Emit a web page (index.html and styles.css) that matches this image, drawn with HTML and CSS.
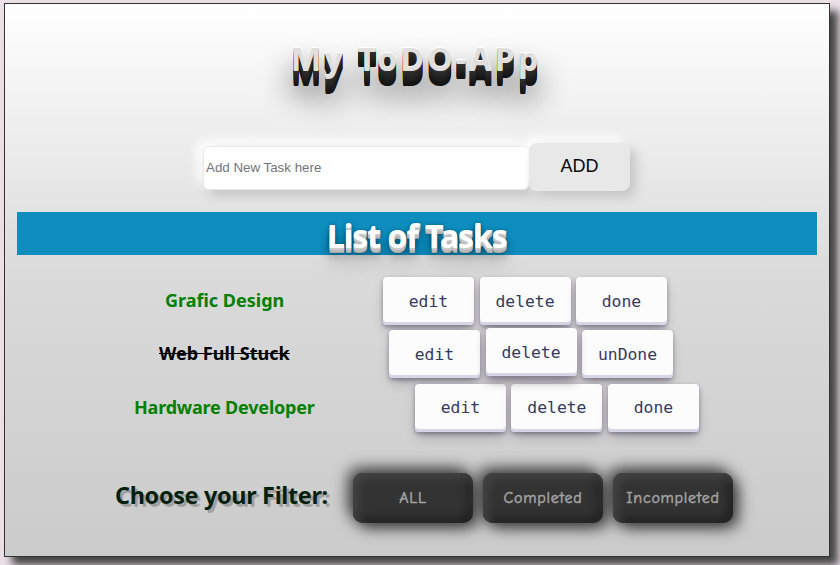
FILE: index.html
```html
<!DOCTYPE html>
<html lang="en">
<head>
<meta charset="utf-8">
<title>My ToDO-APp</title>
<link rel="stylesheet" href="styles.css">
</head>
<body>
<main class="app">
  <h1 class="title">My ToDO-APp</h1>
  <form class="add-form">
    <input class="task-input" type="text" placeholder="Add New Task here">
    <button class="add-button" type="button">ADD</button>
  </form>
  <h2 class="list-title">List of Tasks</h2>
  <ul class="tasks">
    <li class="task task-first">
      <span class="name">Grafic Design</span>
      <button class="key">edit</button><button class="key">delete</button><button class="key">done</button>
    </li>
    <li class="task task-second">
      <span class="name finished">Web Full Stuck</span>
      <button class="key">edit</button><button class="key raised">delete</button><button class="key">unDone</button>
    </li>
    <li class="task task-third">
      <span class="name">Hardware Developer</span>
      <button class="key">edit</button><button class="key">delete</button><button class="key">done</button>
    </li>
  </ul>
  <div class="filters">
    <h3 class="filter-title">Choose your Filter:</h3>
    <button class="filter">ALL</button><button class="filter">Completed</button><button class="filter">Incompleted</button>
  </div>
</main>
</body>
</html>
```
FILE: styles.css
```css
* { box-sizing: border-box; }
html, body { height: 100%; }
body {
  margin: 0;
  padding: 3px 0 0 4px;
  overflow: hidden;
  background: #ebe1e6;
  font-family: "Noto Sans", "Open Sans", sans-serif;
}
.app {
  width: 826px;
  height: 554px;
  padding: 0 12px;
  border: 1px solid #333;
  background: linear-gradient(#fff, #dadada 50%, #cbcbcb);
  box-shadow: 8px 8px 8px #444;
}
h1, h2, h3, ul { margin: 0; padding: 0; }
button { border: 0; padding: 0; font: inherit; }
.title {
  height: 139px;
  padding: 33px 0 0 274px;
  font-size: 32px;
  line-height: 44px;
  letter-spacing: 3.3px;
  white-space: nowrap;
  color: #e0dfdc;
  text-shadow: 0 -1px 0 #fff, 0 1px 0 #2e2e2e, 0 2px 0 #2c2c2c, 0 3px 0 #2a2a2a, 0 4px 0 #282828, 0 5px 0 #262626, 0 6px 0 #242424, 0 7px 0 #222, 0 8px 0 #202020, 0 9px 0 #1e1e1e, 0 10px 0 #1c1c1c, 0 11px 0 #1a1a1a, 0 12px 0 #181818, 0 13px 0 #161616, 0 14px 0 #141414, 0 15px 0 #121212, 0 22px 30px rgba(0, 0, 0, .9);
}
.add-form { display: flex; height: 69px; padding-left: 186px; }
.task-input {
  width: 326px;
  height: 44px;
  margin-top: 3px;
  padding: 0 2px 1px;
  border: 1px solid #e8e8e8;
  border-radius: 6px;
  background: #fff;
  font: 13.333px "Liberation Sans", sans-serif;
  box-shadow: 6px 6px 12px #c5c5c5, -6px -6px 12px #fff;
}
.add-button {
  width: 101px;
  height: 48px;
  padding-bottom: 2px;
  border-radius: 8px;
  background: #e8e8e8;
  color: #090909;
  font: 18px "Liberation Sans", sans-serif;
  box-shadow: 6px 6px 12px #c5c5c5, -6px -6px 12px #fff;
}
.list-title {
  height: 43px;
  padding-left: 310px;
  background: #0e8dbf;
  color: #fff;
  font-size: 32px;
  line-height: 48px;
  letter-spacing: -1.05px;
  text-shadow: 0 1px 0 #ccc, 0 2px 0 #c9c9c9, 0 3px 0 #bbb, 0 4px 0 #b9b9b9, 0 5px 0 #aaa, 0 6px 1px rgba(0, 0, 0, .1), 0 0 5px rgba(0, 0, 0, .1), 0 1px 3px rgba(0, 0, 0, .3), 0 3px 5px rgba(0, 0, 0, .2), 0 5px 10px rgba(0, 0, 0, .25), 0 10px 10px rgba(0, 0, 0, .2), 0 20px 20px rgba(0, 0, 0, .15);
}
.tasks { display: grid; gap: 5.4px; padding-top: 22px; list-style: none; }
.task { display: flex; height: 48px; gap: 5.5px; }
.task-first { padding-left: 148px; }
.task-second { padding-left: 142px; }
.task-third { padding-left: 117px; }
.name {
  width: 212.5px;
  color: green;
  font-size: 18px;
  font-weight: 700;
  line-height: 46px;
  white-space: nowrap;
}
.task-second .name { width: 224.5px; }
.task-third .name { width: 275.4px; letter-spacing: -.2px; }
.finished { color: #000; text-decoration: line-through; }
.key {
  width: 91px;
  height: 48px;
  border-radius: 4px;
  background: #fcfcfd;
  color: #36395a;
  font: 16.4px "DejaVu Sans Mono", monospace;
  box-shadow: rgba(45, 35, 66, .4) 0 2px 4px, rgba(45, 35, 66, .3) 0 7px 13px -3px, #d6d6e7 0 -3px 0 inset;
}
.raised { transform: translateY(-2px); box-shadow: rgba(45, 35, 66, .4) 0 4px 8px, rgba(45, 35, 66, .3) 0 7px 13px -3px, #d6d6e7 0 -3px 0 inset; }
.filters { display: flex; gap: 10px; padding: 41.2px 0 0 98px; }
.filter-title {
  width: 228px;
  color: #001f0d;
  font-size: 23.4px;
  line-height: 45px;
  letter-spacing: -.32px;
  white-space: nowrap;
  text-shadow: 3px 3px 0 rgba(0, 0, 0, .2), 2px 2px 0 rgba(0, 0, 0, .08);
}
.filter {
  width: 120px;
  height: 50px;
  border-radius: 10px;
  background: #333;
  color: #a4a4a4;
  font: 16px "Comic Neue", "Comic Sans MS", "Open Sans", sans-serif;
  letter-spacing: .75px;
  -webkit-text-stroke: .5px #a4a4a4;
  box-shadow: 5px 5px 15px #3a3a3a, -5px -5px 15px #444, inset 5px 5px 10px #444, inset -5px -5px 10px #222;
}
```
